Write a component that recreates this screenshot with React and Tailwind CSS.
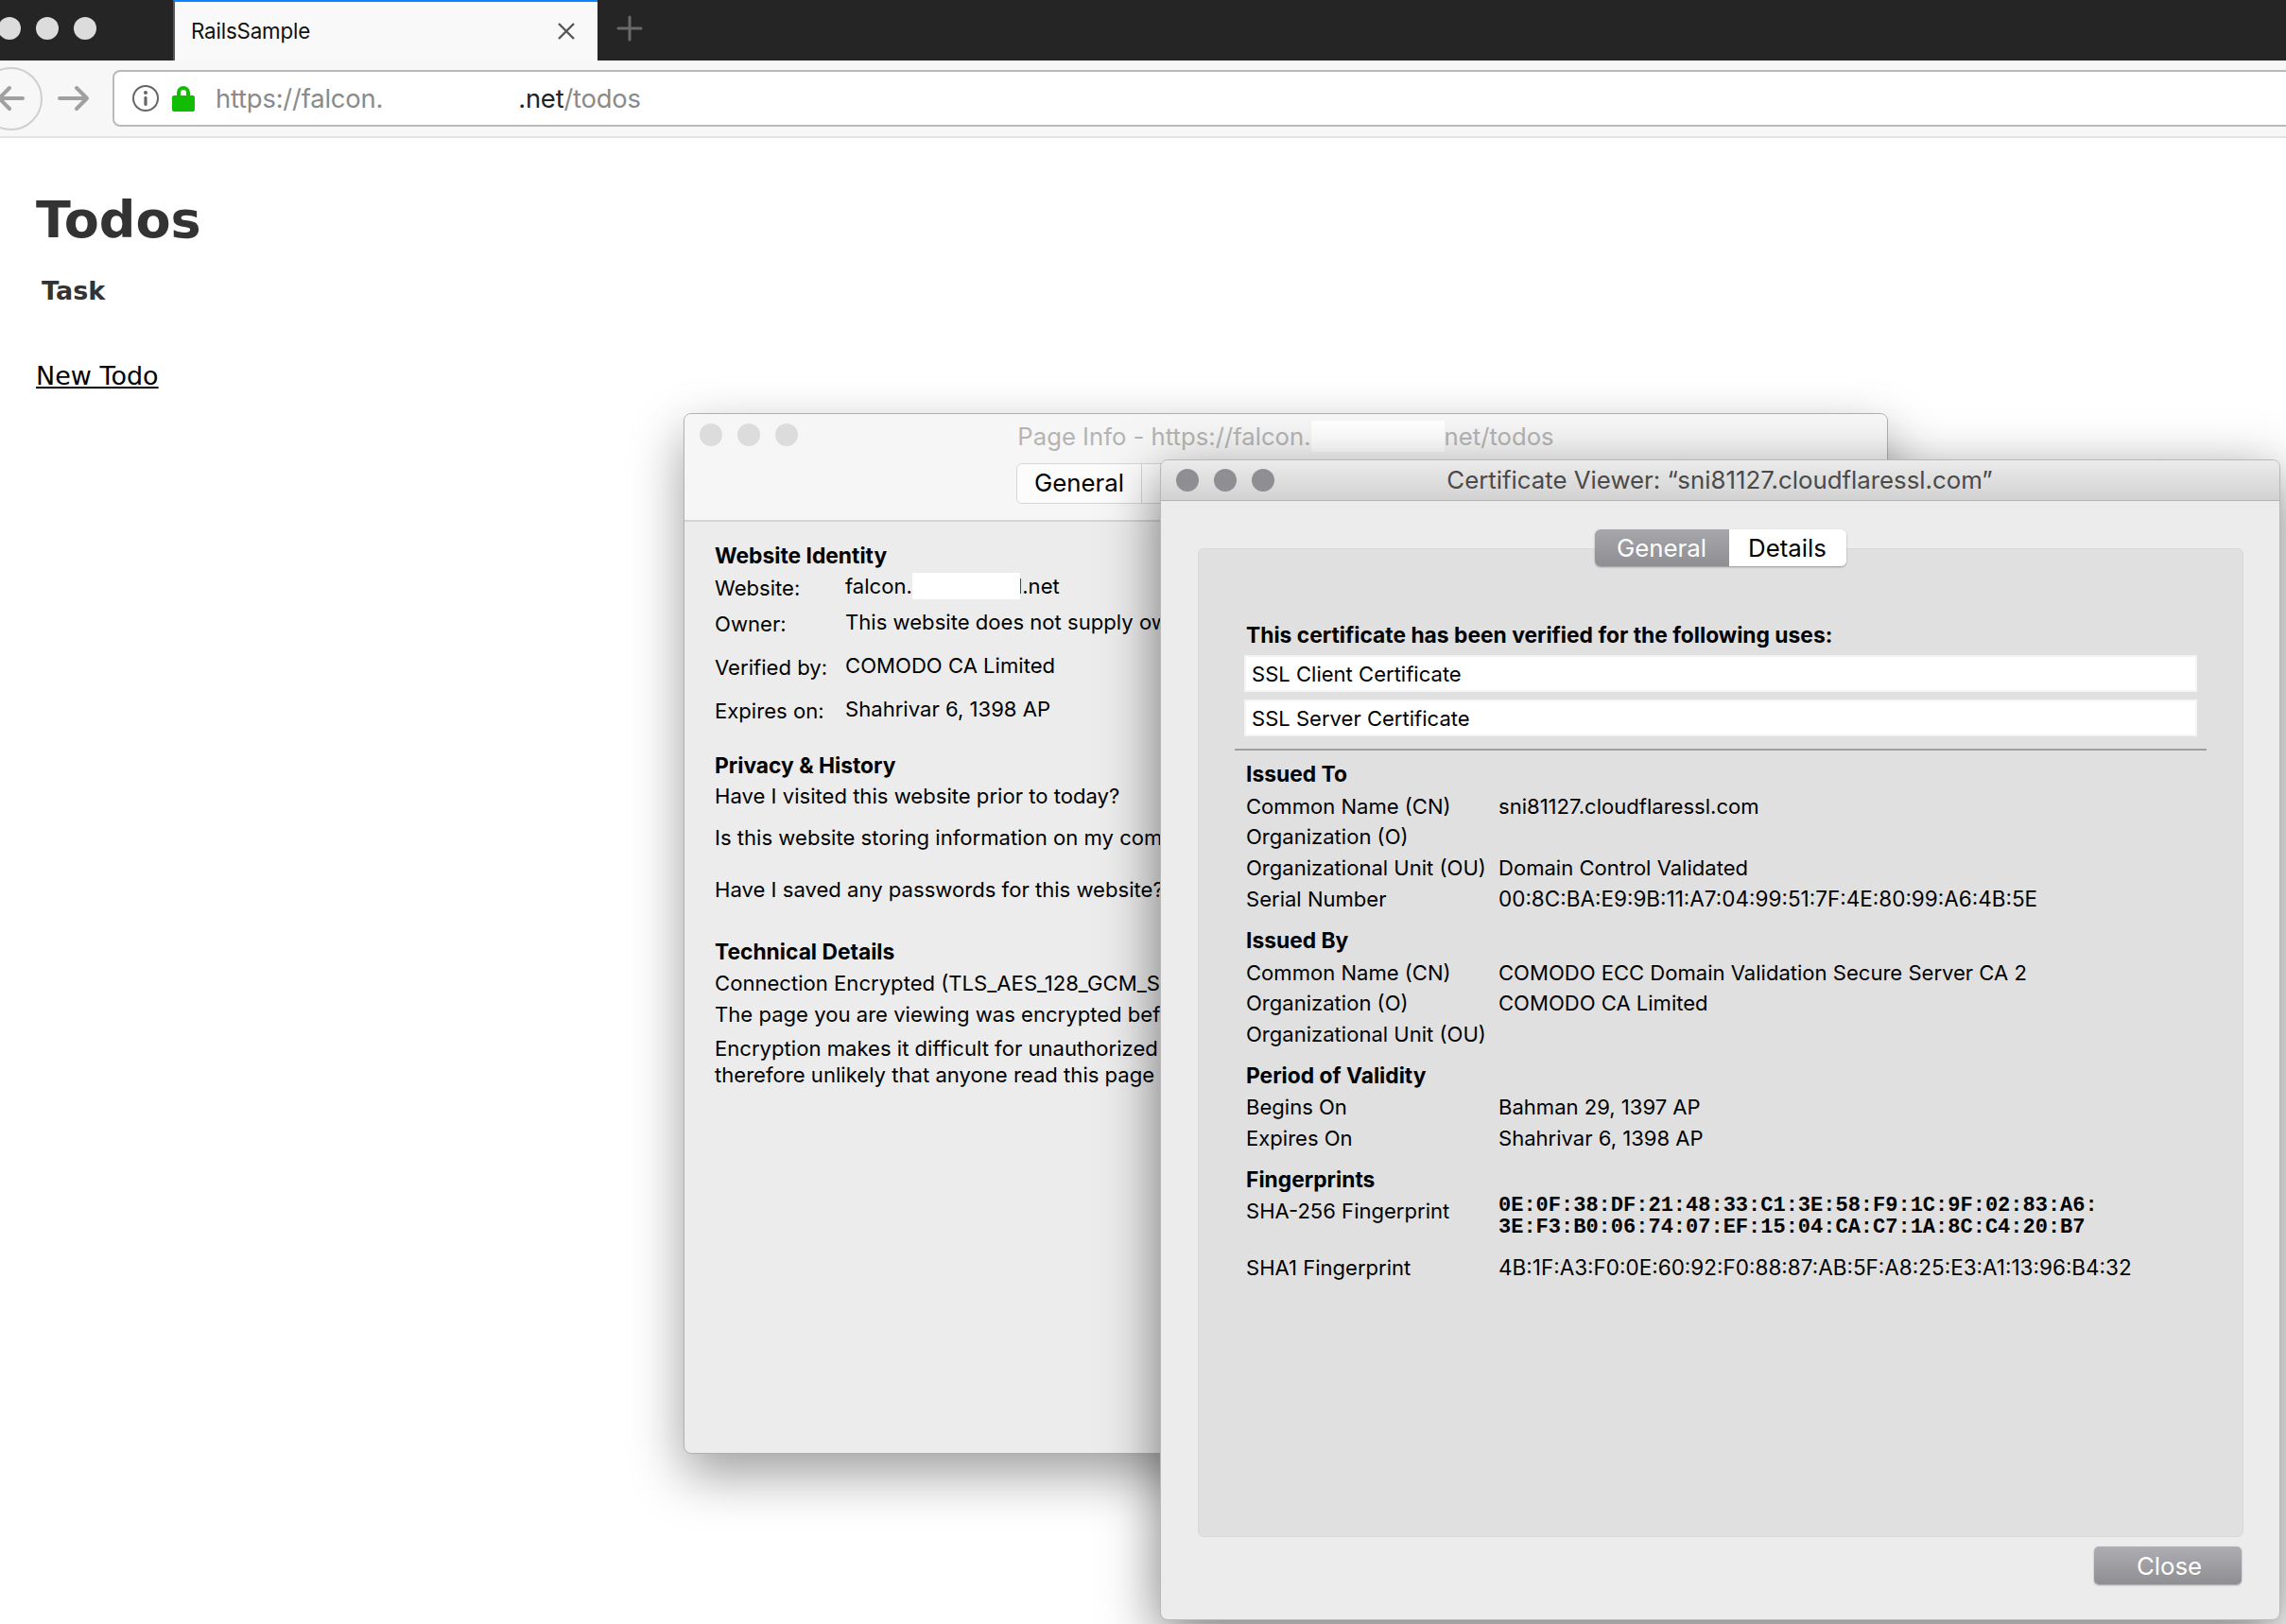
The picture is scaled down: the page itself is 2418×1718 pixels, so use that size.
const ui = { fontFamily: '"Inter", "Liberation Sans", sans-serif' };

function Lights({ color }) {
  return (
    <div className="flex gap-[16px]">
      <span className={`w-[24px] h-[24px] rounded-full ${color}`} />
      <span className={`w-[24px] h-[24px] rounded-full ${color}`} />
      <span className={`w-[24px] h-[24px] rounded-full ${color}`} />
    </div>
  );
}

function Chrome() {
  return (
    <>
      <div className="flex h-[64px] bg-[#252525]">
        <div className="w-[183px] shrink-0 flex items-start pt-[18px] -ml-[2px]">
          <Lights color="bg-[#dcdcdc]" />
        </div>
        <div className="w-[449px] shrink-0 h-full bg-[#f9f9f9] border-t-[2px] border-t-[#0a84ff] border-l-[2px] border-l-[#555555] ml-[2px] flex items-center pl-[17px] pr-[23px]">
          <span className="text-[22.4px] text-[#111111] tracking-[-0.2px] flex-1">RailsSample</span>
          <svg width="20" height="20" viewBox="0 0 20 20" fill="none" stroke="#555555" strokeWidth="2.4"><path d="M2 2 L18 18 M18 2 L2 18" /></svg>
        </div>
        <div className="pl-[20px] pt-[16px]">
          <svg width="28" height="28" viewBox="0 0 28 28" fill="none" stroke="#6a6a6a" strokeWidth="3" strokeLinecap="round"><path d="M14 2 V26 M2 14 H26" /></svg>
        </div>
      </div>
      <div className="flex items-center h-[82px] bg-[#f7f7f7] border-b-[2px] border-b-[#e2e2e2] relative">
        <div className="w-[67px] h-[67px] -ml-[22px] shrink-0 rounded-full border-[2px] border-[#cfcfcf] flex items-center justify-center">
          <svg width="30" height="30" viewBox="0 0 30 30" className="ml-[-2px]" fill="none" stroke="#a0a0a0" strokeWidth="4" strokeLinecap="round" strokeLinejoin="round"><path d="M28 15 H3 M14 4 L3 15 L14 26" /></svg>
        </div>
        <svg width="34" height="30" viewBox="0 0 34 30" className="ml-[16px] shrink-0" fill="none" stroke="#a0a0a0" strokeWidth="4" strokeLinecap="round" strokeLinejoin="round"><path d="M2 15 H31 M20 4 L31 15 L20 26" /></svg>
        <div className="ml-[24px] flex-1 h-[60px] rounded-l-[8px] border-[2px] border-[#bababa] bg-white flex items-center pl-[18px] mr-[-4px]">
          <svg width="30" height="30" viewBox="0 0 30 30" fill="none" className="shrink-0">
            <circle cx="15" cy="15" r="13" stroke="#666666" strokeWidth="2" />
            <circle cx="15" cy="9" r="2" fill="#666666" />
            <rect x="13.4" y="13" width="3.2" height="10" rx="1.4" fill="#666666" />
          </svg>
          <svg width="26" height="30" viewBox="0 0 26 30" className="ml-[12px] shrink-0">
            <path d="M6 13 V9 a7 7 0 0 1 14 0 V13 H16 V9 a3 3 0 0 0 -6 0 V13 Z" fill="#12bc00" />
            <rect x="1" y="12" width="24" height="17" rx="2" fill="#12bc00" />
          </svg>
          <div className="ml-[21px] mt-[2px] flex items-center text-[27.4px] text-[#8a8a8a] tracking-[-0.2px] whitespace-nowrap">
            <span>https://falcon.</span>
            <span className="w-[143px] h-[30px] bg-white inline-block" />
            <span className="text-[#222222]">.net</span>
            <span>/todos</span>
          </div>
        </div>
      </div>
    </>
  );
}

function Page() {
  return (
    <div className="pl-[38px] text-[#333333]" style={{ fontFamily: '"DejaVu Sans", sans-serif' }}>
      <h1 className="text-[54px] leading-[60px] font-bold mt-[57px]">Todos</h1>
      <div className="text-[27px] leading-[32px] font-bold ml-[6px] mt-[29px]">Task</div>
      <a className="block w-fit text-[27px] leading-[32px] text-black underline mt-[58px]">New Todo</a>
    </div>
  );
}

function L({ mt, bold, children, className = "" }) {
  return <div className={`h-[28px] leading-[28px] whitespace-nowrap ${mt} ${bold ? "font-bold text-[22.8px]" : ""} ${className}`}>{children}</div>;
}

function KV({ mt, k, children }) {
  return (
    <div className={`flex h-[28px] leading-[28px] whitespace-nowrap ${mt}`}>
      <span className="w-[138px] shrink-0 mt-[1px]">{k}</span>
      <span className="-mt-[1px]">{children}</span>
    </div>
  );
}

function PageInfo() {
  return (
    <div className="absolute left-[723px] top-[437px] w-[1274px] h-[1101px] rounded-[8px] border border-[#b0b0b0] bg-[#ececec] overflow-hidden shadow-[0_22px_55px_rgba(0,0,0,0.38)] text-black text-[22.1px]" style={ui}>
      <div className="h-[114px] bg-[#f6f6f6] border-b-[2px] border-b-[#d4d4d4] relative">
        <div className="flex items-start pl-[16px] pt-[10px]"><Lights color="bg-[#dcdcdc]" /></div>
        <div className="absolute left-0 right-0 top-[7px] flex justify-center text-[25.7px] leading-[34px] text-[#b4b4b4] whitespace-nowrap">
          <span>Page Info - https://falcon.</span>
          <span className="w-[141px] h-[33px] bg-white" />
          <span>net/todos</span>
        </div>
        <div className="absolute left-[351px] top-[52px] flex h-[43px] rounded-[6px] border border-[#d6d6d6] bg-[#fcfcfc] text-[25.8px] leading-[40px]">
          <span className="w-[132px] text-center text-black border-r border-r-[#d6d6d6]">General</span>
          <span className="w-[120px]" />
        </div>
      </div>
      <div className="pl-[32px] pt-[22px]">
        <L bold>Website Identity</L>
        <KV mt="mt-[5px]" k="Website:">falcon.<span className="relative z-10 inline-block align-top w-[114px] h-[28px] bg-white" /><span className="-ml-[3px]">l.net</span></KV>
        <KV mt="mt-[10px]" k="Owner:">This website does not supply ow</KV>
        <KV mt="mt-[18px]" k="Verified by:">COMODO CA Limited</KV>
        <KV mt="mt-[18px]" k="Expires on:">Shahrivar 6, 1398 AP</KV>
        <L bold mt="mt-[31px]">Privacy &amp; History</L>
        <L mt="mt-[4px]">Have I visited this website prior to today?</L>
        <L mt="mt-[16px]">Is this website storing information on my com</L>
        <L mt="mt-[27px]">Have I saved any passwords for this website?</L>
        <L bold mt="mt-[38px]">Technical Details</L>
        <L mt="mt-[5px]">Connection Encrypted (TLS_AES_128_GCM_SH</L>
        <L mt="mt-[5px]">The page you are viewing was encrypted befo</L>
        <L mt="mt-[8px]">Encryption makes it difficult for unauthorized</L>
        <L mt="mt-[0px]">therefore unlikely that anyone read this page</L>
      </div>
    </div>
  );
}

function Row({ mt, k, children, hex }) {
  return (
    <div className={`grid grid-cols-[267px_1fr] h-[28px] leading-[28px] whitespace-nowrap ${mt}`}>
      <span>{k}</span>
      <span className={hex ? "text-[22.5px]" : ""}>{children}</span>
    </div>
  );
}

function CertViewer() {
  const mono = { fontFamily: '"Liberation Mono", monospace' };
  return (
    <div className="absolute left-[1227px] top-[486px] w-[1185px] h-[1228px] rounded-[8px] border border-[#b8b8b8] bg-[#ececec] overflow-hidden shadow-[0_18px_60px_rgba(0,0,0,0.52)] text-black text-[22.05px]" style={ui}>
      <div className="h-[43px] bg-gradient-to-b from-[#ebebeb] to-[#d2d2d2] border-b border-b-[#b4b4b4] relative flex items-center pl-[16px]">
        <Lights color="bg-[#8e8e93]" />
        <div className="absolute inset-0 flex items-center justify-center text-[25.8px] text-[#4a4a4a] whitespace-nowrap pr-[1px]">Certificate Viewer: “sni81127.cloudflaressl.com”</div>
      </div>
      <div className="pl-[39px] pr-[38px] pt-[30px] flex flex-col">
        <div className="flex justify-center -mb-[19px] relative z-10 pr-[1px]">
          <div className="flex h-[39px] rounded-[6px] overflow-hidden shadow-[0_1px_2px_rgba(0,0,0,0.35)] text-[25.8px] leading-[40px]">
            <span className="w-[142px] text-center text-white bg-gradient-to-b from-[#a6a6ab] to-[#8e8e93]">General</span>
            <span className="w-[124px] text-center text-black bg-white">Details</span>
          </div>
        </div>
        <div className="h-[1046px] rounded-[6px] border border-[#d8d8d8] bg-[#e0e0e0] pl-[50px] pr-[48px] pt-[77px]">
          <L bold>This certificate has been verified for the following uses:</L>
          <div className="mt-[7px] -ml-[2px] h-[39px] bg-white border-[2px] border-[#f4f4f4] pl-[6px] leading-[36px]">SSL Client Certificate</div>
          <div className="mt-[8px] -ml-[2px] h-[39px] bg-white border-[2px] border-[#f4f4f4] pl-[6px] leading-[36px]">SSL Server Certificate</div>
          <div className="mt-[13px] -ml-[12px] -mr-[10px] h-[2px] bg-[#a0a0a0]" />
          <L bold mt="mt-[11px]">Issued To</L>
          <Row mt="mt-[6px]" k="Common Name (CN)">sni81127.cloudflaressl.com</Row>
          <Row mt="mt-[4px]" k="Organization (O)"></Row>
          <Row mt="mt-[5px]" k="Organizational Unit (OU)">Domain Control Validated</Row>
          <Row mt="mt-[5px]" hex k="Serial Number">00:8C:BA:E9:9B:11:A7:04:99:51:7F:4E:80:99:A6:4B:5E</Row>
          <L bold mt="mt-[16px]">Issued By</L>
          <Row mt="mt-[6px]" k="Common Name (CN)">COMODO ECC Domain Validation Secure Server CA 2</Row>
          <Row mt="mt-[4px]" k="Organization (O)">COMODO CA Limited</Row>
          <Row mt="mt-[5px]" k="Organizational Unit (OU)"></Row>
          <L bold mt="mt-[16px]">Period of Validity</L>
          <Row mt="mt-[5px]" k="Begins On">Bahman 29, 1397 AP</Row>
          <Row mt="mt-[5px]" k="Expires On">Shahrivar 6, 1398 AP</Row>
          <L bold mt="mt-[16px]">Fingerprints</L>
          <div className="grid grid-cols-[267px_1fr] mt-[5px] whitespace-nowrap">
            <span className="leading-[28px]">SHA-256 Fingerprint</span>
            <span className="text-[22px] leading-[23px] font-bold -mt-[3px]" style={mono}>0E:0F:38:DF:21:48:33:C1:3E:58:F9:1C:9F:02:83:A6:<br />3E:F3:B0:06:74:07:EF:15:04:CA:C7:1A:8C:C4:20:B7</span>
          </div>
          <Row mt="mt-[17px]" hex k="SHA1 Fingerprint">4B:1F:A3:F0:0E:60:92:F0:88:87:AB:5F:A8:25:E3:A1:13:96:B4:32</Row>
        </div>
        <div className="flex justify-end pt-[10px] pr-[2px]">
          <button className="w-[156px] h-[40px] rounded-[5px] bg-gradient-to-b from-[#adadb2] to-[#8e8e93] shadow-[0_1px_2px_rgba(0,0,0,0.35)] text-white text-[25.8px] leading-[41px] pl-[3px]">Close</button>
        </div>
      </div>
    </div>
  );
}

export default function App() {
  return (
    <div className="relative w-[2418px] h-[1718px] overflow-hidden bg-white" style={ui}>
      <Chrome />
      <Page />
      <PageInfo />
      <CertViewer />
    </div>
  );
}
